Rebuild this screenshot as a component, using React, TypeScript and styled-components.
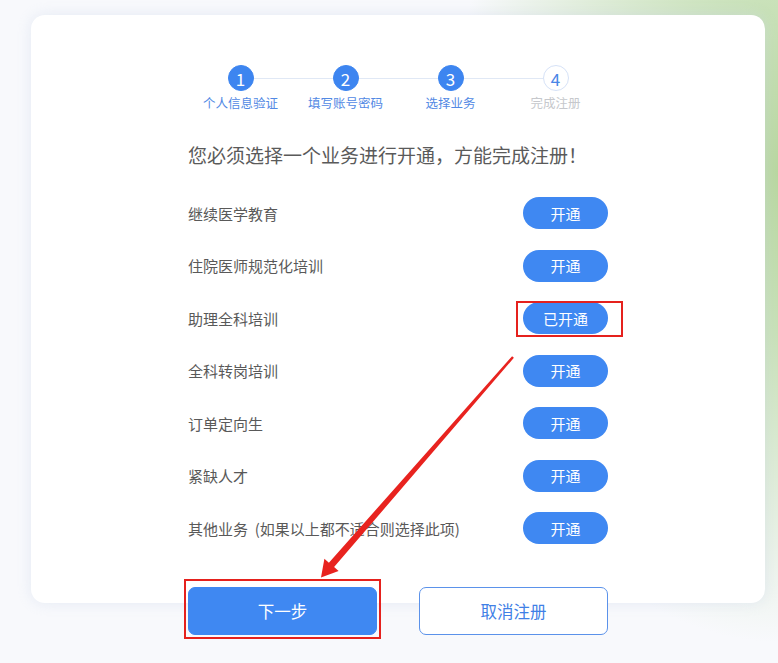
import React from 'react';
import styled, { createGlobalStyle } from 'styled-components';

// =============================================================================
// Global
// =============================================================================

const GlobalStyle = createGlobalStyle`
  html, body {
    margin: 0;
    padding: 0;
  }
  body {
    font-family: "Noto Sans CJK SC", "Noto Sans", sans-serif;
    background: #f8f9fc;
  }
`;

// =============================================================================
// Styled Components
// =============================================================================

const Page = styled.div`
  position: relative;
  width: 778px;
  height: 663px;
  overflow: hidden;
  background:
    radial-gradient(ellipse 330px 470px at 100% 26%, #b8d79f 0%, rgba(192, 221, 172, 0.85) 35%, rgba(248, 249, 252, 0) 100%),
    #f8f9fc;
  padding: 15px 0 0 31px;
  box-sizing: border-box;
`;

const Card = styled.div`
  width: 734px;
  height: 588px;
  background: #fff;
  border-radius: 14px;
  box-shadow: 0 0 14px rgba(205, 215, 235, 0.45);
  display: flex;
  flex-direction: column;
  align-items: center;
  padding-top: 50px;
  box-sizing: border-box;
`;

const Content = styled.div`
  width: 420px;
  display: flex;
  flex-direction: column;
`;

const StepTrack = styled.div`
  display: flex;
  align-items: center;
  padding: 0 39.5px;
`;

const StepCircle = styled.div<{ $done: boolean }>`
  width: 26px;
  height: 26px;
  border-radius: 50%;
  box-sizing: border-box;
  display: flex;
  align-items: center;
  justify-content: center;
  font-size: 17px;
  line-height: 1;
  color: ${(p) => (p.$done ? '#fff' : '#4a86e6')};
  background: ${(p) => (p.$done ? '#3d85f0' : '#fff')};
  border: 1px solid ${(p) => (p.$done ? '#3d85f0' : '#d6e2f7')};
`;

const Connector = styled.div`
  flex: 1;
  height: 1px;
  background: #e0e8f5;
`;

const StepLabels = styled.div`
  display: grid;
  grid-template-columns: repeat(4, 1fr);
  margin-top: 4px;
`;

const StepLabel = styled.div<{ $done: boolean }>`
  text-align: center;
  font-size: 12.5px;
  line-height: 16px;
  color: ${(p) => (p.$done ? '#5289e4' : '#c6c8cc')};
`;

const Headline = styled.h2`
  margin: 31px 0 19px;
  font-size: 19px;
  line-height: 26px;
  font-weight: 400;
  color: #5a5a5a;
`;

const Row = styled.div`
  height: 52.5px;
  display: flex;
  align-items: center;
  justify-content: space-between;
`;

const RowLabel = styled.span`
  font-size: 15px;
  color: #595959;
  white-space: pre;
`;

const ButtonWrap = styled.div`
  position: relative;
  display: flex;
`;

const PillButton = styled.button`
  width: 85px;
  height: 32px;
  border: none;
  border-radius: 16px;
  background: #3f88f2;
  color: #fff;
  font-family: inherit;
  font-size: 15px;
  padding: 0;
  cursor: pointer;
`;

const Highlight = styled.div<{ $inset: string }>`
  position: absolute;
  inset: ${(p) => p.$inset};
  border: 2px solid #e5211d;
  pointer-events: none;
`;

const ActionRow = styled.div`
  display: flex;
  justify-content: space-between;
  margin-top: 32px;
`;

const ActionButton = styled.button<{ $primary?: boolean }>`
  width: 189px;
  height: 48px;
  border-radius: 7px;
  box-sizing: border-box;
  font-family: inherit;
  font-size: 16.5px;
  padding: 0;
  cursor: pointer;
  background: ${(p) => (p.$primary ? '#3f88f2' : '#fff')};
  color: ${(p) => (p.$primary ? '#fff' : '#3f80e6')};
  border: 1px solid ${(p) => (p.$primary ? '#3f88f2' : '#5b92ea')};
`;

const ArrowLayer = styled.svg`
  position: absolute;
  inset: 0;
  pointer-events: none;
`;

// =============================================================================
// Data
// =============================================================================

const steps = [
  { n: 1, label: '个人信息验证', done: true },
  { n: 2, label: '填写账号密码', done: true },
  { n: 3, label: '选择业务', done: true },
  { n: 4, label: '完成注册', done: false },
];

const services = [
  { name: '继续医学教育', opened: false },
  { name: '住院医师规范化培训', opened: false },
  { name: '助理全科培训', opened: true },
  { name: '全科转岗培训', opened: false },
  { name: '订单定向生', opened: false },
  { name: '紧缺人才', opened: false },
  { name: '其他业务  (如果以上都不适合则选择此项)', opened: false },
];

// =============================================================================
// App
// =============================================================================

const App = () => (
  <>
    <GlobalStyle />
    <Page>
      <Card>
        <Content>
          <StepTrack>
            {steps.map((s, i) => (
              <React.Fragment key={s.n}>
                {i > 0 && <Connector />}
                <StepCircle $done={s.done}>{s.n}</StepCircle>
              </React.Fragment>
            ))}
          </StepTrack>
          <StepLabels>
            {steps.map((s) => (
              <StepLabel key={s.n} $done={s.done}>
                {s.label}
              </StepLabel>
            ))}
          </StepLabels>

          <Headline>您必须选择一个业务进行开通，方能完成注册！</Headline>

          {services.map((s) => (
            <Row key={s.name}>
              <RowLabel>{s.name}</RowLabel>
              <ButtonWrap>
                <PillButton>{s.opened ? '已开通' : '开通'}</PillButton>
                {s.opened && <Highlight $inset="-1px -15px -3px -7px" />}
              </ButtonWrap>
            </Row>
          ))}

          <ActionRow>
            <ButtonWrap>
              <ActionButton $primary>下一步</ActionButton>
              <Highlight $inset="-8px -4px -4px -4px" />
            </ButtonWrap>
            <ActionButton>取消注册</ActionButton>
          </ActionRow>
        </Content>
      </Card>

      {/* red annotation arrow, tapering toward the head */}
      <ArrowLayer width="778" height="663" viewBox="0 0 778 663">
        <polygon
          fill="#e8231f"
          points="513.9,357.8 334.1,567.1 338.6,571.1 321,577.5 324.4,558.7 328.9,562.7 512.1,356.2"
        />
      </ArrowLayer>
    </Page>
  </>
);

export default App;
